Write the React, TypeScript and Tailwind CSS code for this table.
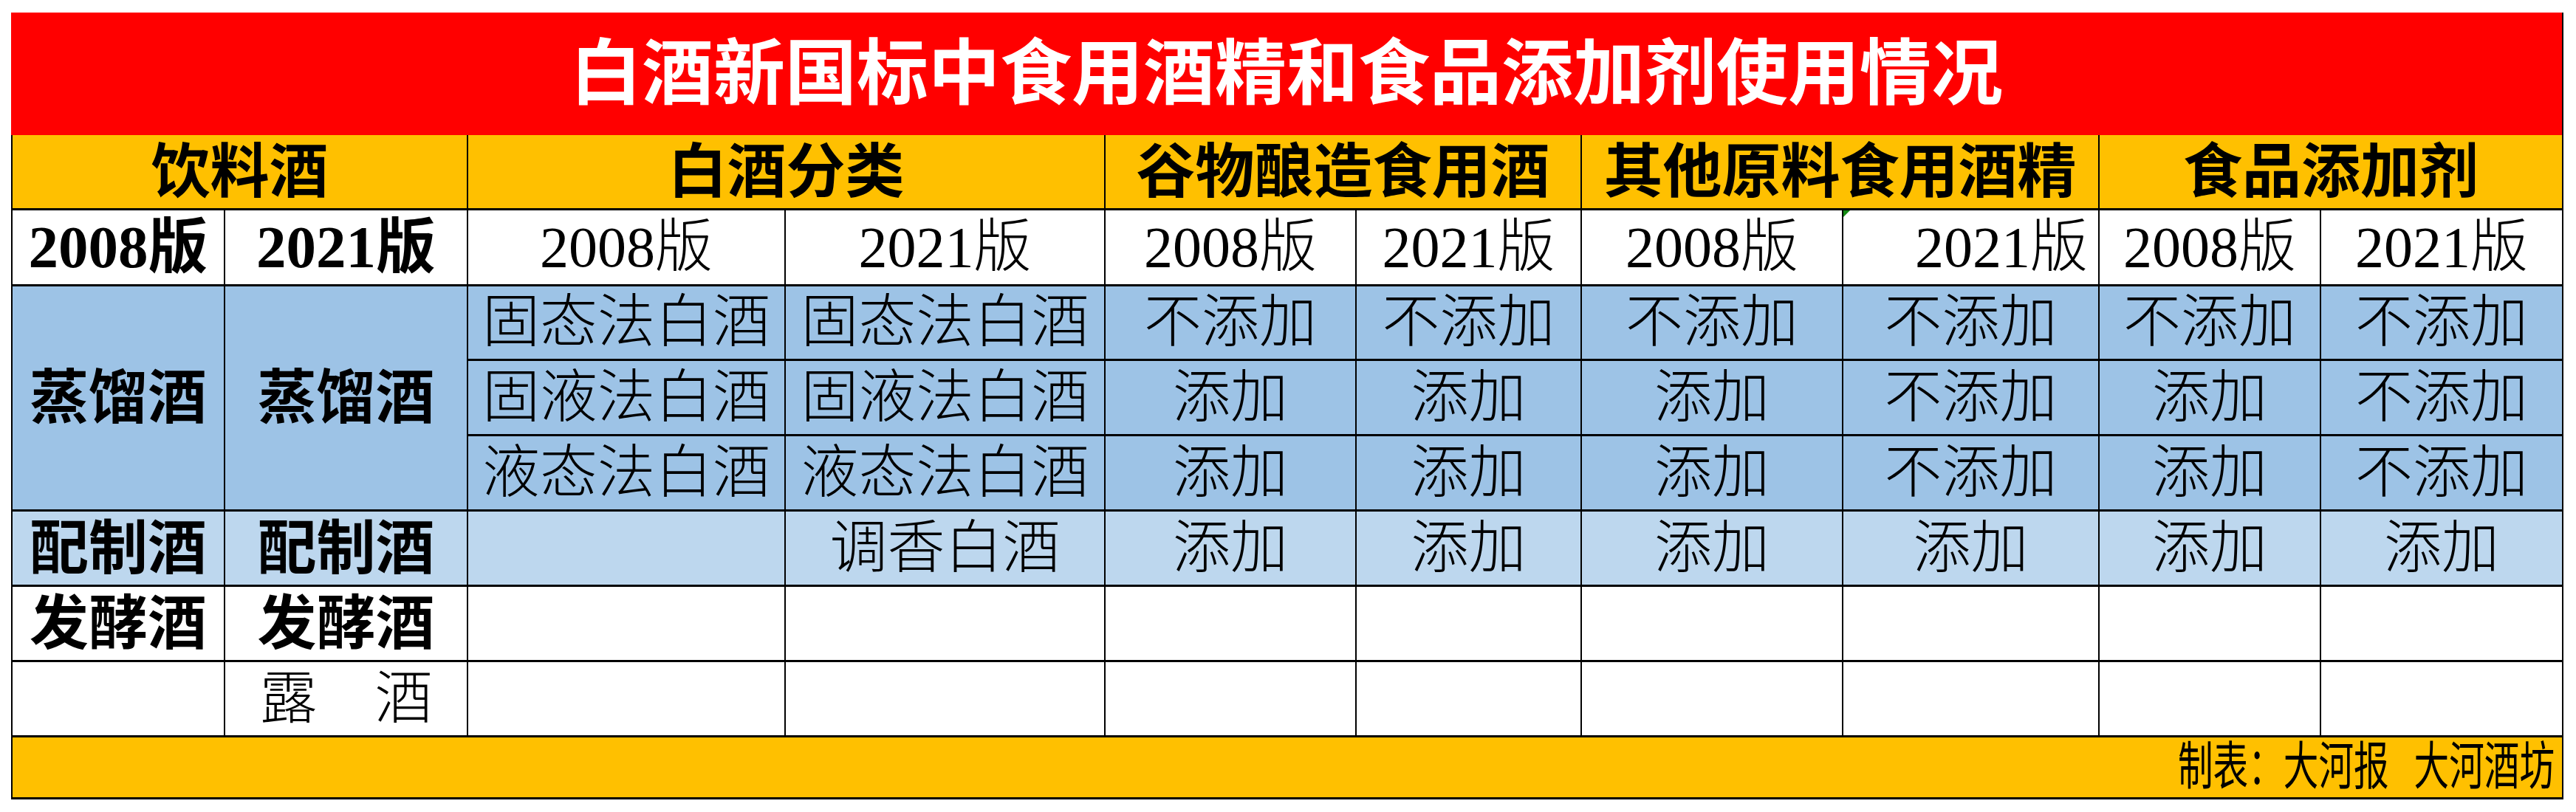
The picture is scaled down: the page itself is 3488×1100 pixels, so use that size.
import React from "react";

type CellProps = {
  children?: React.ReactNode;
  className?: string;
};

function Cell({ children, className = "" }: CellProps) {
  return (
    <div
      className={`relative flex items-center justify-center whitespace-nowrap leading-none border-black border-r-2 border-b-[3px] ${className}`}
    >
      {children}
    </div>
  );
}

const distilled = [
  {
    kind: "固态法白酒",
    values: ["不添加", "不添加", "不添加", "不添加", "不添加", "不添加"],
  },
  {
    kind: "固液法白酒",
    values: ["添加", "添加", "添加", "不添加", "添加", "不添加"],
  },
  {
    kind: "液态法白酒",
    values: ["添加", "添加", "添加", "不添加", "添加", "不添加"],
  },
];

export default function App() {
  const bold = "text-[80px] font-bold";
  const body = "text-[78px] font-light";
  const dark = "bg-[#9dc3e6]";
  const light = "bg-[#bdd7ee]";

  return (
    <div className="w-[3488px] h-[1100px] bg-white pl-[15px] pt-[17px] text-black font-['Liberation_Serif','Noto_Sans_CJK_SC',serif]">
      <div className="grid w-[3456px] grid-cols-[290px_329px_430px_433px_340px_305px_354px_347px_300px_328px] grid-rows-[166px_102px_103px_101px_102px_102px_102px_102px_102px_84px]">
        {/* title */}
        <div className="col-span-10 flex items-center justify-center bg-[#ff0000] border-r-2 border-black text-white text-[97px] font-bold leading-none">
          白酒新国标中食用酒精和食品添加剂使用情况
        </div>

        {/* group headers */}
        <Cell className={`col-span-2 border-l-2 bg-[#ffc000] ${bold}`}>饮料酒</Cell>
        <Cell className={`col-span-2 bg-[#ffc000] ${bold}`}>白酒分类</Cell>
        <Cell className={`col-span-2 bg-[#ffc000] ${bold}`}>谷物酿造食用酒</Cell>
        <Cell className={`col-span-2 bg-[#ffc000] ${bold}`}>其他原料食用酒精</Cell>
        <Cell className={`col-span-2 bg-[#ffc000] ${bold}`}>食品添加剂</Cell>

        {/* versions */}
        <Cell className={`border-l-2 text-[81px] font-bold`}>2008版</Cell>
        <Cell className={`text-[81px] font-bold`}>2021版</Cell>
        <Cell className={body}>2008版</Cell>
        <Cell className={body}>2021版</Cell>
        <Cell className={body}>2008版</Cell>
        <Cell className={body}>2021版</Cell>
        <Cell className={body}>2008版</Cell>
        <Cell className={`${body} justify-end pr-[14px]`}>
          <span className="absolute left-0 top-0 h-0 w-0 border-t-[9px] border-r-[9px] border-t-[#138a13] border-r-transparent" />
          2021版
        </Cell>
        <Cell className={body}>2008版</Cell>
        <Cell className={body}>2021版</Cell>

        {/* distilled spirits */}
        <Cell className={`row-span-3 border-l-2 ${dark} ${bold}`}>蒸馏酒</Cell>
        <Cell className={`row-span-3 ${dark} ${bold}`}>蒸馏酒</Cell>
        {distilled.map((row, i) => {
          const line = i < 2 ? "border-b-2" : "";
          return (
            <React.Fragment key={row.kind}>
              <Cell className={`${dark} ${body} ${line}`}>{row.kind}</Cell>
              <Cell className={`${dark} ${body} ${line}`}>{row.kind}</Cell>
              {row.values.map((v, j) => (
                <Cell key={j} className={`${dark} ${body} ${line}`}>
                  {v}
                </Cell>
              ))}
            </React.Fragment>
          );
        })}

        {/* compounded */}
        <Cell className={`border-l-2 ${light} ${bold}`}>配制酒</Cell>
        <Cell className={`${light} ${bold}`}>配制酒</Cell>
        <Cell className={light} />
        <Cell className={`${light} ${body}`}>调香白酒</Cell>
        {["添加", "添加", "添加", "添加", "添加", "添加"].map((v, j) => (
          <Cell key={j} className={`${light} ${body}`}>
            {v}
          </Cell>
        ))}

        {/* fermented */}
        <Cell className={`border-l-2 ${bold}`}>发酵酒</Cell>
        <Cell className={bold}>发酵酒</Cell>
        {Array.from({ length: 8 }).map((_, j) => (
          <Cell key={j} />
        ))}

        {/* lu jiu */}
        <Cell className="border-l-2" />
        <Cell className={body}>露　酒</Cell>
        {Array.from({ length: 8 }).map((_, j) => (
          <Cell key={j} />
        ))}

        {/* footer */}
        <div className="col-span-10 flex items-center justify-end overflow-hidden border-2 border-t-0 border-b-[3px] border-black bg-[#ffc000] pr-[10px]">
          <span className="origin-right scale-x-[0.68] whitespace-nowrap text-[70px] leading-none">
            制表：大河报<span className="inline-block w-[50px]" />大河酒坊
          </span>
        </div>
      </div>
    </div>
  );
}
